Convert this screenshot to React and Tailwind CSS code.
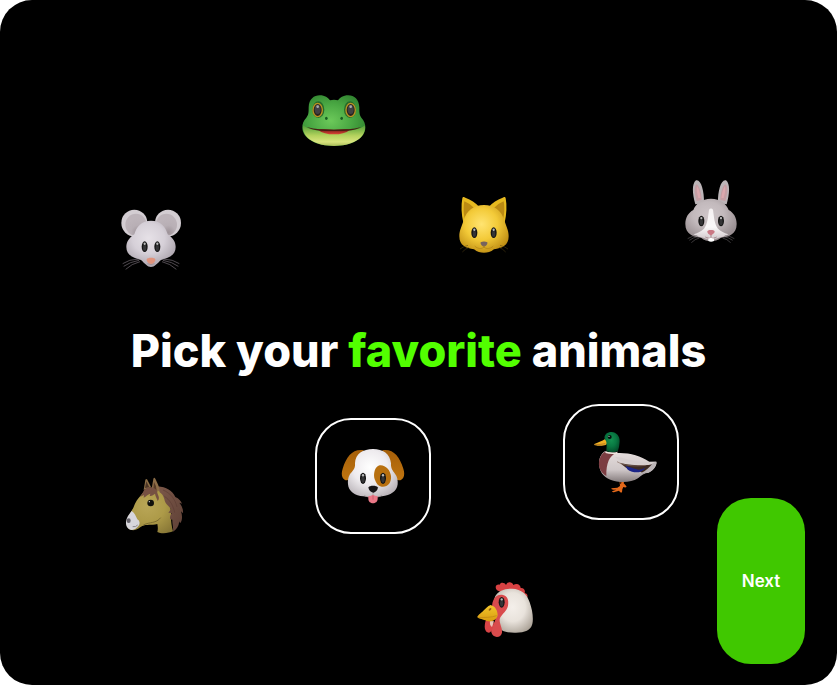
import React, { useState } from "react";

function Shade({ id, stops, cx = "45%", cy = "38%", r = "65%" }) {
  return (
    <radialGradient id={id} cx={cx} cy={cy} r={r}>
      {stops.map((color, i) => (
        <stop key={color} offset={i / (stops.length - 1)} stopColor={color} />
      ))}
    </radialGradient>
  );
}

function Eye({ x, y, rx = 8, ry = 15 }) {
  return (
    <g>
      <ellipse cx={x} cy={y} rx={rx} ry={ry} fill="#151515" />
      <ellipse cx={x} cy={y + 3} rx={rx * 0.55} ry={ry * 0.6} fill="#343436" />
      <ellipse cx={x} cy={y - ry * 0.55} rx={rx * 0.38} ry={ry * 0.22} fill="#b9b9b9" />
    </g>
  );
}

function Frog() {
  return (
    <svg viewBox="0 0 240 240" className="size-20" aria-hidden="true">
      <defs>
        <Shade id="frog-skin" stops={["#6cc95a", "#4aa843", "#2c7d2c"]} cy="50%" />
        <linearGradient id="frog-chin" x1="0" y1="0" x2="0" y2="1">
          <stop offset="0" stopColor="#4f9e38" />
          <stop offset=".5" stopColor="#b5d35e" />
          <stop offset=".8" stopColor="#d8e47e" />
          <stop offset="1" stopColor="#a9bb58" />
        </linearGradient>
        <linearGradient id="frog-mouth" x1="0" y1="0" x2="0" y2="1">
          <stop offset="0" stopColor="#6b1a16" />
          <stop offset="1" stopColor="#e04436" />
        </linearGradient>
      </defs>
      <path d="M44 82C45 57 60 46 77 46c17 0 24 7 31 15q12-3 24 0c7-8 14-15 31-15 18 0 32 12 33 36 0 16 0 22 6 31 8 9 13 19 12 32-2 32-42 53-94 53s-93-21-95-53c-1-13 4-23 12-32 7-9 7-15 7-31Z" fill="url(#frog-skin)" />
      <path d="M27 136c16 14 50 18 93 18s78-4 93-18c5 42-44 62-93 62s-97-20-93-62Z" fill="url(#frog-chin)" />
      <path d="M72 149c16-2 32 0 48 0s32-2 48 0c-12 10-28 14-48 14s-36-4-48-14Z" fill="url(#frog-mouth)" />
      <path d="M38 141c25 7 53 8 82 8s57-1 82-8c-21 12-45 12-82 12s-61 0-82-12Z" fill="#471d12" />
      <ellipse cx="73" cy="89" rx="18" ry="25" fill="#286a2b" />
      <ellipse cx="168" cy="89" rx="18" ry="25" fill="#286a2b" />
      <ellipse cx="71" cy="90" rx="14" ry="20" fill="#29231f" stroke="#b99423" strokeWidth="4" />
      <ellipse cx="170" cy="90" rx="14" ry="20" fill="#29231f" stroke="#b99423" strokeWidth="4" />
      <ellipse cx="71" cy="88" rx="9" ry="14" fill="#414043" />
      <ellipse cx="170" cy="88" rx="9" ry="14" fill="#414043" />
      <ellipse cx="71" cy="80" rx="4" ry="4" fill="#a9a9aa" />
      <ellipse cx="170" cy="80" rx="4" ry="4" fill="#a9a9aa" />
      <ellipse cx="97" cy="115" rx="4" ry="5" fill="#185c22" />
      <ellipse cx="143" cy="115" rx="4" ry="5" fill="#185c22" />
    </svg>
  );
}

function Mouse() {
  return (
    <svg viewBox="0 0 240 240" className="size-20" aria-hidden="true">
      <defs>
        <Shade id="mouse-fur" stops={["#e6e1e7", "#d6d0d8", "#a8a0a9"]} />
        <Shade id="mouse-ear" stops={["#9d9298", "#b8afb5", "#bdb4ba"]} cx="60%" cy="85%" />
      </defs>
      <ellipse cx="70" cy="69" rx="39" ry="40" fill="#d3cdd2" />
      <ellipse cx="171" cy="69" rx="39" ry="40" fill="#d3cdd2" />
      <ellipse cx="75" cy="74" rx="32" ry="33" fill="url(#mouse-ear)" />
      <ellipse cx="166" cy="74" rx="32" ry="33" fill="url(#mouse-ear)" />
      <path d="M120 62c-28 0-44 18-50 41-14 10-24 21-24 38 0 26 24 33 44 39 12 11 19 21 30 21s18-10 30-21c20-6 44-13 44-39 0-17-10-28-24-38-6-23-22-41-50-41Z" fill="url(#mouse-fur)" />
      <Eye x={101} y={140} rx={9} ry={16} />
      <Eye x={139} y={140} rx={9} ry={16} />
      <path d="M107 178c2-6 24-6 26 0 1 6-5 14-13 14s-14-8-13-14Z" fill="#e0937c" />
      <path d="M109 191q11 6 22 0" fill="none" stroke="#9c8586" strokeWidth="2" />
      <path d="M82 177q-28 1-47 14M84 181q-28 5-46 18M87 185q-25 6-43 23M158 177q28 1 47 14M156 181q28 5 46 18M153 185q25 6 43 23" fill="none" stroke="#787078" strokeWidth="2" />
    </svg>
  );
}

function Cat() {
  return (
    <svg viewBox="0 0 240 240" className="size-20" aria-hidden="true">
      <defs>
        <Shade id="cat-fur" stops={["#ffe471", "#f3ca38", "#bd8b12"]} cy="40%" />
      </defs>
      <path d="M55 40c1-5 5-5 9-2 17 6 30 15 42 28l-48 47c-6-25-7-52-3-73Z" fill="#e6b91f" />
      <path d="M185 40c-1-5-5-5-9-2-17 6-30 15-42 28l48 47c6-25 7-52 3-73Z" fill="#e6b91f" />
      <path d="M61 49q20 8 32 22l-30 32c-5-15-5-39-2-54Zm118 0q-20 8-32 22l30 32c5-15 5-39 2-54Z" fill="#bb8a13" />
      <path d="M120 60c-30 0-53 17-61 46-5 17-13 30-13 48 0 28 20 36 44 39 10 8 19 10 30 10s20-2 30-10c24-3 44-11 44-39 0-18-8-31-13-48-8-29-31-46-61-46Z" fill="url(#cat-fur)" />
      <Eye x={91} y={143} rx={9} ry={16} />
      <Eye x={149} y={143} rx={9} ry={16} />
      <path d="M110 172q10-5 20 0c2 6-6 13-10 13s-12-7-10-13Z" fill="#77645e" />
      <path d="M120 182v5M93 184c8 8 20 9 27 2 7 7 19 6 27-2" fill="none" stroke="#b08413" strokeWidth="2" strokeLinecap="round" />
      <path d="M72 181q-13 3-24 11M75 187q-12 5-20 14M168 181q13 3 24 11M165 187q12 5 20 14" fill="none" stroke="#594516" strokeWidth="1.5" />
    </svg>
  );
}

function Rabbit() {
  return (
    <svg viewBox="0 0 240 240" className="size-20" aria-hidden="true">
      <defs>
        <Shade id="rabbit-fur" stops={["#cfc6c9", "#c2b9bc", "#998f92"]} r="60%" />
        <linearGradient id="rabbit-blaze" x1="0" y1="0" x2="0" y2="1">
          <stop offset="0" stopColor="#f5f1f2" />
          <stop offset=".6" stopColor="#faf8f9" />
          <stop offset="1" stopColor="#cfc6c9" />
        </linearGradient>
      </defs>
      <path d="M73 97C64 65 62 35 75 25c14-5 25 30 24 68Zm94 0c9-32 11-62-2-72-14-5-25 30-24 68Z" fill="#bcb5b8" />
      <path d="M77 87c-8-23-8-47 0-50 8 4 15 27 15 47Zm86 0c8-23 8-47 0-50-8 4-15 27-15 47Z" fill="#c59fa5" />
      <path d="M82 78q-7-24-4-36 8 11 11 36Zm76 0q7-24 4-36-8 11-11 36Z" fill="#dba8ae" />
      <path d="M120 80c-28 0-46 15-53 34-15 8-24 23-24 42 0 30 23 39 47 41 10 8 19 10 30 10s20-2 30-10c24-2 47-11 47-41 0-19-9-34-24-42-7-19-25-34-53-34Z" fill="url(#rabbit-fur)" />
      <path d="M114 113q6-7 12 0c3 22 4 42 15 57 9 9 22 13 31 17-8 6-19 9-29 10q-23 11-46 0c-10-1-21-4-29-10 9-4 22-8 31-17 11-15 12-35 15-57Z" fill="url(#rabbit-blaze)" />
      <Eye x={91} y={147} rx={9} ry={16} />
      <Eye x={150} y={147} rx={9} ry={16} />
      <path d="M109 179c-2-6 20-7 22-1 1 5-6 9-11 13-5-4-11-7-11-12Z" fill="#ca7884" />
      <path d="M112 197c5-5 11-5 17 0v10q-9 5-17 0Z" fill="#fff" />
      <path d="M120 190v5m0 0c-5 4-11 4-17 0m17 0c5 4 11 4 17 0" fill="none" stroke="#8a6469" strokeWidth="2" />
      <path d="M79 190q-15 1-29 10M81 194q-14 2-26 11M85 198q-13 3-24 14M161 190q15 1 29 10M159 194q14 2 26 11M155 198q13 3 24 14" fill="none" stroke="#777074" strokeWidth="1.5" />
    </svg>
  );
}

function Horse() {
  return (
    <svg viewBox="0 0 240 240" className="size-20" aria-hidden="true">
      <defs>
        <Shade id="horse-coat" stops={["#b9a657", "#ad9a48", "#877636"]} r="75%" />
        <linearGradient id="horse-mane" x1="0" y1="0" x2="1" y2="1">
          <stop stopColor="#7c5849" />
          <stop offset="1" stopColor="#5e4036" />
        </linearGradient>
      </defs>
      <path d="M89 72l5-30q2-6 6-1l11 22Z" fill="#8c6f47" />
      <path d="M93 66l4-20 9 18Z" fill="#4d3526" />
      <path d="M84 84c14-15 44-22 62-8 18 18 26 46 25 74 0 18 2 30 6 46-12 6-36 8-47 2 2-8 2-15 0-24-18 5-33 0-45 6-9 5-16 12-27 13-15 0-22-12-21-25 1-10 12-26 21-43 6-17 14-28 26-41Z" fill="url(#horse-coat)" />
      <path d="M53 135c8 4 13 16 17 25 8 5 8 12 5 18-7 9-13 14-21 14-12 0-19-11-18-24 1-12 8-22 17-33Z" fill="#d7d6db" />
      <ellipse cx="44" cy="164" rx="6" ry="7" fill="#646169" />
      <path d="M56 182q9 2 15-5" fill="none" stroke="#8b888f" strokeWidth="3" />
      <path d="M88 177c20-10 38-4 52-22" fill="none" stroke="#7d6d31" strokeWidth="3" />
      <path d="M131 61c25 2 45 14 53 32 11 5 17 12 20 20l-8-3c8 10 12 20 11 32l-6-6c5 15 4 28-3 36l-2-6c-2 16-9 26-19 31 2-12-3-24-2-36l-6-1c-3-7 1-13 4-19l-10-1 8-10c-7-13-17-13-20-31-3-11-9-17-14-20Z" fill="url(#horse-mane)" />
      <path d="M147 72c22 9 36 26 42 51M151 91c16 10 27 27 31 49" fill="none" stroke="#5c3d33" strokeWidth="2" />
      <path d="M113 68l5-29q2-7 6-1 10 18 13 35l-12 7Z" fill="#8c6d47" />
      <path d="M120 48q9 14 8 26l-10-5Z" fill="#573b27" />
      <path d="M131 84c-2-17-15-23-30-19-15 5-12 15-23 28l12-6-1 8c8-3 12-11 20-12l-2 7c8 1 11-5 16-7 1 9 7 15 8 22 6-6 4-13 0-21Z" fill="#765142" />
      <circle cx="110" cy="111" r="10" fill="#11110c" />
      <circle cx="106" cy="107" r="2" fill="#d8d8d8" />
    </svg>
  );
}

function Dog() {
  return (
    <svg viewBox="60 60 240 240" className="size-20" aria-hidden="true">
      <defs>
        <Shade id="dog-fur" stops={["#ffffff", "#eeebee", "#b4aeb3"]} r="70%" />
        <linearGradient id="dog-ear" x1="0" y1="0" x2="0" y2="1">
          <stop stopColor="#a55f09" />
          <stop offset="1" stopColor="#c07510" />
        </linearGradient>
      </defs>
      <path d="M152 103c-33-5-51 18-63 55-7 21 1 35 13 35 22-4 42-40 50-90Zm56 0c33-5 51 18 63 55 7 21-1 35-13 35-22-4-42-40-50-90Z" fill="url(#dog-ear)" />
      <path d="M180 99c-30 0-53 14-54 43 2 18-10 25-16 34-5 9-6 19-5 29 1 21 22 35 46 36 18 4 38 4 56 0 25-2 45-15 47-36 1-12-1-23-8-32-7-9-13-16-12-31-3-29-24-43-54-43Z" fill="url(#dog-fur)" />
      <path d="M200 148c17-2 32 14 34 32 2 20-10 34-28 32-12-1-16-11-21-22-5-15 0-39 15-42Z" fill="#b8700f" />
      <Eye x={150} y={187} rx={9} ry={17} />
      <Eye x={210} y={187} rx={9} ry={17} />
      <path d="M167 214c2-6 24-6 27 0 2 7-7 15-13 17-7-2-16-10-14-17Z" fill="#161416" />
      <path d="M180 229v8m0 0c-7 8-20 7-27 0m27 0c7 8 20 7 27 0" fill="none" stroke="#a19899" strokeWidth="2" />
      <path d="M166 240q8 1 14-4 6 5 14 4v8c0 18-28 18-28 0Z" fill="#eb7887" />
      <path d="M180 239v12" stroke="#b84e60" strokeWidth="2" />
    </svg>
  );
}

function Duck() {
  return (
    <svg viewBox="60 60 240 240" className="size-20" aria-hidden="true">
      <defs>
        <linearGradient id="duck-body" x1="0" y1="0" x2="0" y2="1">
          <stop stopColor="#e6dedd" />
          <stop offset=".6" stopColor="#cfc7c8" />
          <stop offset="1" stopColor="#857c7d" />
        </linearGradient>
        <Shade id="duck-head" stops={["#139150", "#087842", "#034a29"]} />
      </defs>
      <path d="M175 230l2 22-8 5-18 2q-1 4 6 4l9 0-13 5q2 4 8 2l13-4q5 8 9 5l1-9 3-7q7 3 10-1l-4-5-5-5 5-20-9 0-4 22-2-1 1-21Z" fill="#e4681a" />
      <path d="M132 148c8 4 26 5 39 5 36-1 67 9 94 26l21 0c3 9-7 24-23 33-13 1-22 8-32 17-24 15-59 13-83 4-22-8-33-27-34-48 0-19 9-32 18-37Z" fill="url(#duck-body)" />
      <path d="M132 149q15 5 33 4c-19 9-30 29-29 69-16-10-24-23-22-42 1-15 9-25 18-31Z" fill="#7c3d42" />
      <path d="M177 183c20 5 44 7 78 7l26-8c-6 16-15 27-35 32l-13-8-38-9Z" fill="#3e2b24" />
      <path d="M194 192l38 11c9 0 13-3 21-6-8 13-24 17-40 12-12-3-17-9-19-17Z" fill="#1b2487" />
      <path d="M161 164c29 2 61 18 100 16l25-1c-10 9-24 11-46 10-28-1-58-6-79-25Z" fill="#d7cfcf" />
      <path d="M168 179c21 12 49 15 85 11" fill="none" stroke="#876d62" strokeWidth="2" />
      <path d="M286 179c2 12-11 30-27 33l-20 2c16-8 27-18 37-31Z" fill="#bbb4b6" />
      <path d="M131 111c-3-13 8-21 21-21 14 0 25 13 24 28-1 12-2 21-6 30q-17 7-34-1l1-18c-4-5-6-11-6-18Z" fill="url(#duck-head)" />
      <path d="M134 148q18 7 36 1l-2 6q-18 3-35-2Z" fill="#f0e5df" />
      <path d="M131 112c-7 5-18 9-31 14-2 5 8 5 16 5 9 1 17 0 20-4 2-5-1-11-5-15Z" fill="#edaf24" />
      <path d="M101 128q17 0 32-3" stroke="#a5651c" strokeWidth="2" fill="none" />
      <circle cx="146" cy="105" r="6" fill="#06110d" />
      <circle cx="144" cy="103" r="2" fill="#c6d5ce" />
    </svg>
  );
}

function Rooster() {
  return (
    <svg viewBox="0 0 240 240" className="size-20" aria-hidden="true">
      <defs>
        <Shade id="rooster-head" stops={["#f4efea", "#e9e3dc", "#aaa196"]} cx="48%" cy="42%" />
        <linearGradient id="rooster-beak" x1="0" y1="0" x2="0" y2="1">
          <stop stopColor="#f3c62b" />
          <stop offset="1" stopColor="#d89b10" />
        </linearGradient>
      </defs>
      <path d="M96 61c-8-10-3-19 8-17 3-9 15-7 19 1 5-12 19-9 22 0 11-7 22-1 22 9 9-1 15 7 12 15 9 2 10 8 7 15L133 78Z" fill="#d84243" />
      <path d="M91 78c9-15 28-23 50-22 29 1 46 18 53 41 8 22 12 48 8 65-5 20-25 27-54 26-26 0-44-5-48-22-8-28-19-66-9-88Z" fill="url(#rooster-head)" />
      <path d="M85 91c5-13 17-18 29-16 13 3 18 14 15 32-3 16-17 23-24 37-5 12 8 29 6 44-3 17-28 17-32-1-3-16 11-27 13-43l-9-22c-3-13-2-22 2-31Z" fill="#d94b4d" />
      <path d="M64 147c-6 14-8 34 3 40 10 5 18-9 19-27l-8-13Z" fill="#d94446" />
      <path d="M75 153q-2 13 6 18l6-17Z" fill="#e9c3b6" />
      <path d="M77 105c14 4 21 17 21 31-4 15-18 21-33 17-9-5-24-6-28-11-1-5 11-13 18-20 8-7 12-13 22-17Z" fill="url(#rooster-beak)" />
      <path d="M40 143c20-1 38 0 55-6" fill="none" stroke="#bb8413" strokeWidth="2" />
      <ellipse cx="75" cy="118" rx="5" ry="3" transform="rotate(-45 75 118)" fill="#976211" />
      <Eye x={110} y={97} rx={9} ry={16} />
    </svg>
  );
}

const animals = [
  { name: "Frog", Icon: Frog, place: "left-[276px] top-[62px]" },
  { name: "Mouse", Icon: Mouse, place: "left-[93px] top-[182px]" },
  { name: "Cat", Icon: Cat, place: "left-[426px] top-[167px]" },
  { name: "Rabbit", Icon: Rabbit, place: "left-[653px] top-[154px]" },
  { name: "Horse", Icon: Horse, place: "left-[96px] top-[448px]" },
  { name: "Dog", Icon: Dog, place: "left-[315px] top-[418px]" },
  { name: "Duck", Icon: Duck, place: "left-[563px] top-[404px]" },
  { name: "Rooster", Icon: Rooster, place: "left-[447px] top-[552px]" },
];

export default function App() {
  const [picked, setPicked] = useState(["Dog", "Duck"]);
  const toggle = (name) =>
    setPicked((list) => (list.includes(name) ? list.filter((n) => n !== name) : [...list, name]));

  return (
    <div className="min-h-screen bg-white font-['Inter',sans-serif]">
      <main className="relative grid min-h-screen grid-rows-[1fr_auto_1fr] overflow-hidden rounded-[32px] bg-black pt-4 text-white">
        <h1 className="row-start-2 text-center text-[45px] leading-[48px] font-extrabold">
          Pick your <span className="text-[#52ff00]">favorite</span> animals
        </h1>
        {animals.map(({ name, Icon, place }) => (
          <button
            key={name}
            type="button"
            aria-label={name}
            aria-pressed={picked.includes(name)}
            onClick={() => toggle(name)}
            className={`absolute flex size-[116px] items-center justify-center rounded-[36px] border-2 border-transparent aria-pressed:border-white ${place}`}
          >
            <Icon />
          </button>
        ))}
        <div className="row-start-3 flex items-end justify-end px-8 pb-[21px]">
          <button type="button" className="h-[166px] w-[88px] rounded-[34px] bg-[#40c800] text-[17px] leading-6 font-semibold">
            Next
          </button>
        </div>
      </main>
    </div>
  );
}
